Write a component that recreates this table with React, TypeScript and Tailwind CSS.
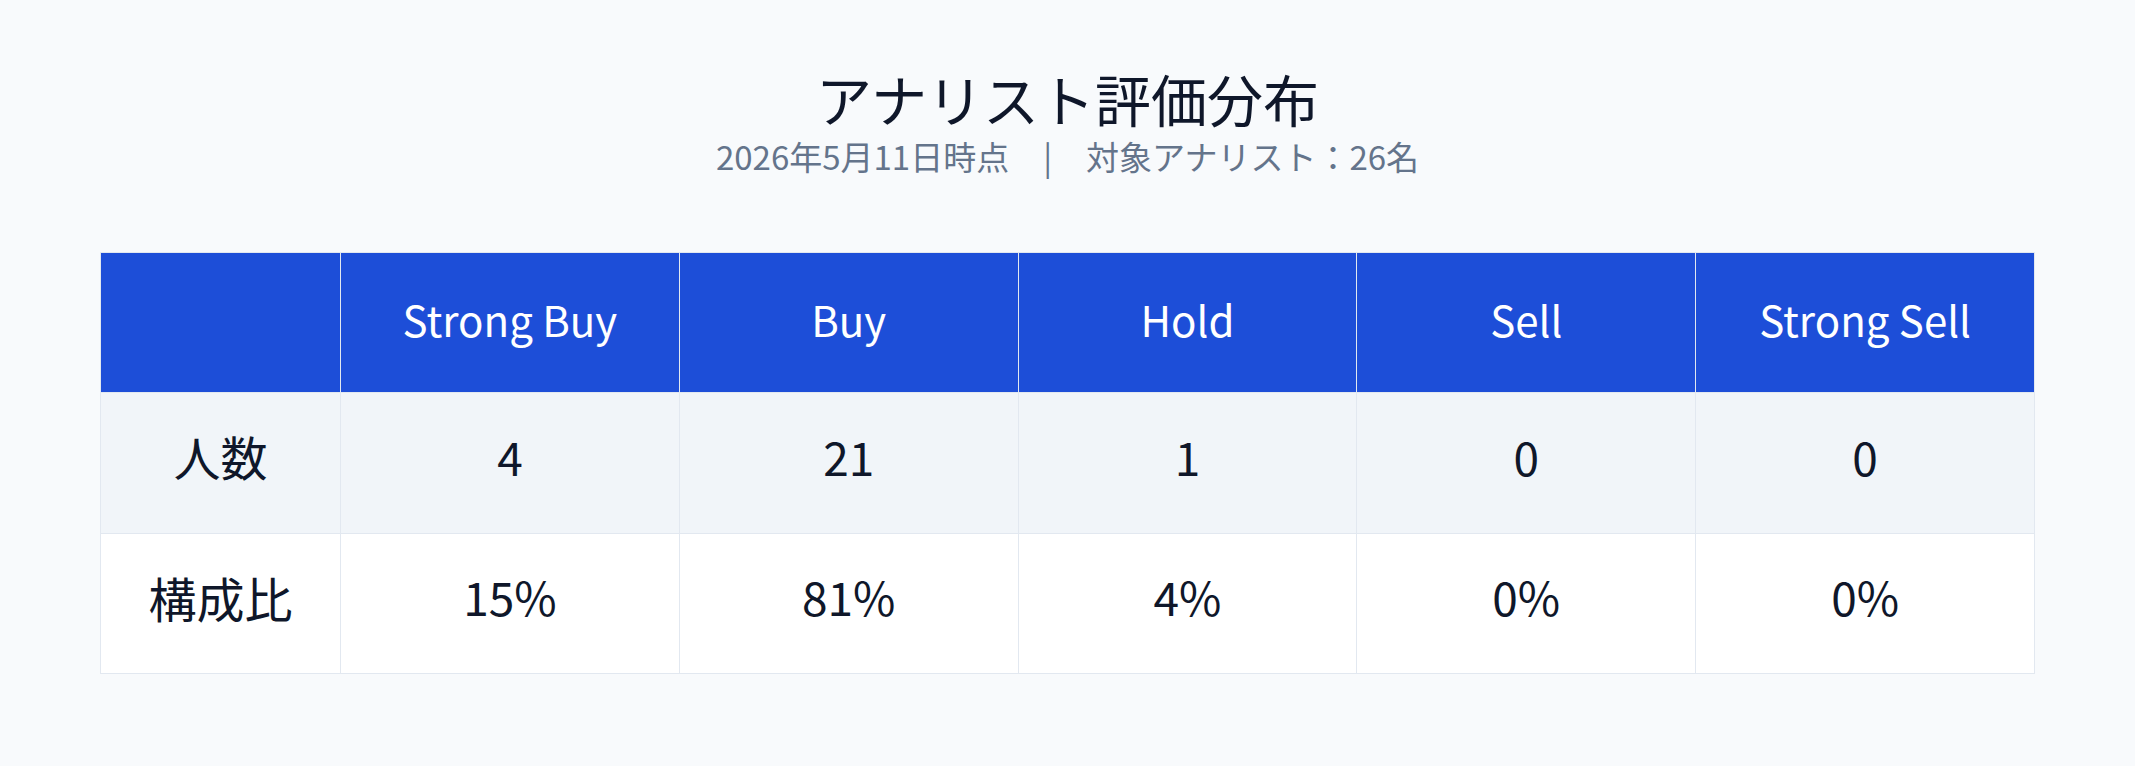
import * as React from "react";

// 評価ごとの人数と構成比
type Rating = {
  label: string;
  count: number;
  share: string;
};

const ratings: Rating[] = [
  { label: "Strong Buy", count: 4, share: "15%" },
  { label: "Buy", count: 21, share: "81%" },
  { label: "Hold", count: 1, share: "4%" },
  { label: "Sell", count: 0, share: "0%" },
  { label: "Strong Sell", count: 0, share: "0%" },
];

const font = { fontFamily: '"Noto Sans CJK JP", "Noto Sans", sans-serif' };

export default function App() {
  return (
    <div
      className="min-h-screen bg-[#f8fafc] flex flex-col items-center px-[100px] pt-[62px] pb-[92px]"
      style={font}
    >
      <h1 className="text-[56px] leading-[72px] text-[#0f172a]">アナリスト評価分布</h1>
      <p className="text-[33px] leading-[44px] text-[#64748b]">
        2026年5月11日時点
        <span className="mx-[34px]">|</span>
        対象アナリスト：26名
      </p>

      <table className="w-full mt-[74px] border-collapse table-fixed">
        <colgroup>
          <col className="w-[240px]" />
          {ratings.map((r) => (
            <col key={r.label} />
          ))}
        </colgroup>
        <thead>
          <tr className="bg-[#1d4ed8] h-[140px]">
            <th className="border border-[#e2e8f0]" />
            {ratings.map((r) => (
              <th
                key={r.label}
                className="border border-[#e2e8f0] text-white text-[42px] font-normal pb-[8px]"
              >
                {r.label}
              </th>
            ))}
          </tr>
        </thead>
        <tbody>
          <tr className="bg-[#f1f5f9] h-[141px]">
            <td className="border border-[#e2e8f0] text-center text-[47px] text-[#0f172a] pb-[14px]">
              人数
            </td>
            {ratings.map((r) => (
              <td
                key={r.label}
                className="border border-[#e2e8f0] text-center text-[46px] text-[#0f172a] pb-[14px]"
              >
                {r.count}
              </td>
            ))}
          </tr>
          <tr className="bg-white h-[140px]">
            <td className="border border-[#e2e8f0] text-center text-[48px] text-[#0f172a] pb-[14px]">
              構成比
            </td>
            {ratings.map((r) => (
              <td
                key={r.label}
                className="border border-[#e2e8f0] text-center text-[46px] text-[#0f172a] pb-[14px]"
              >
                {r.share}
              </td>
            ))}
          </tr>
        </tbody>
      </table>
    </div>
  );
}
